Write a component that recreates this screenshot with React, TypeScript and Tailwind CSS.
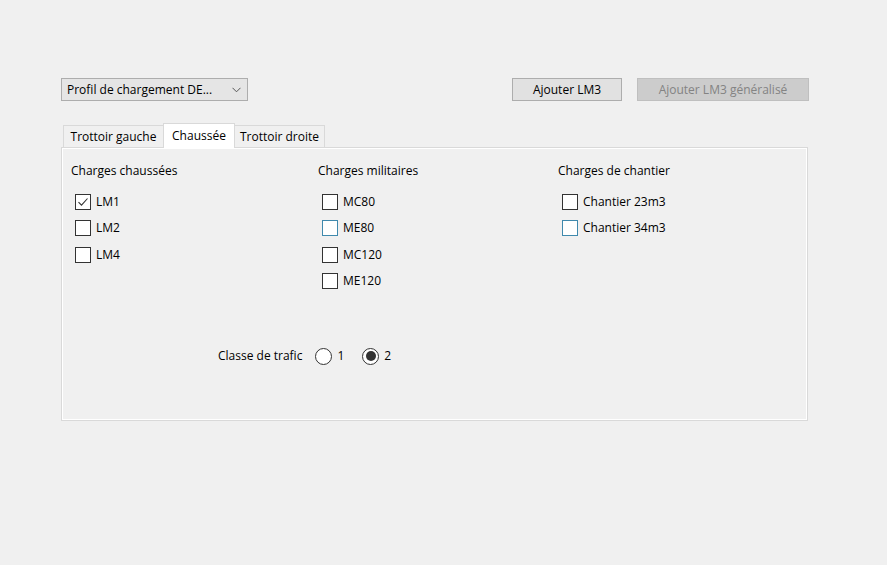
import { useState } from 'react'

const FONT = { fontFamily: '"Open Sans", "Noto Sans", "DejaVu Sans", sans-serif' }

const GROUPS = [
  {
    title: 'Charges chaussées',
    items: [
      { label: 'LM1', checked: true },
      { label: 'LM2' },
      { label: 'LM4' },
    ],
  },
  {
    title: 'Charges militaires',
    items: [
      { label: 'MC80' },
      { label: 'ME80', focus: true },
      { label: 'MC120' },
      { label: 'ME120' },
    ],
  },
  {
    title: 'Charges de chantier',
    items: [
      { label: 'Chantier 23m3' },
      { label: 'Chantier 34m3', focus: true },
    ],
  },
]

type Item = { label: string; checked?: boolean; focus?: boolean }

function CheckRow({ item }: { item: Item }) {
  const [on, setOn] = useState(!!item.checked)
  return (
    <label className="flex h-[26.3px] items-center gap-[5px] cursor-default" onClick={() => setOn(!on)}>
      <span
        className={
          'flex h-[16px] w-[16px] items-center justify-center border bg-white ' +
          (item.focus ? 'border-[#3f89ad]' : 'border-[#333333]')
        }
      >
        {on && (
          <svg width="12" height="12" viewBox="0 0 12 12">
            <path d="M1.5 6.2 L4.5 9.2 L10.5 2.5" fill="none" stroke="#333" strokeWidth="1.1" />
          </svg>
        )}
      </span>
      <span className="text-[12px] text-black">{item.label}</span>
    </label>
  )
}

function Radio({ label, checked }: { label: string; checked?: boolean }) {
  return (
    <span className="flex items-center gap-[5px]">
      <span className="flex h-[17px] w-[17px] items-center justify-center rounded-full border border-[#333333] bg-white">
        {checked && <span className="h-[10px] w-[10px] rounded-full bg-[#333333]" />}
      </span>
      <span>{label}</span>
    </span>
  )
}

const TAB_W = ['w-[100px]', 'w-[72px]', 'w-[90px]']

export default function App() {
  const tabs = ['Trottoir gauche', 'Chaussée', 'Trottoir droite']
  const active = 1

  return (
    <div className="min-h-[565px] w-[887px] bg-[#f0f0f0] pl-[61px] pt-[78px] text-[12px] text-black" style={FONT}>
      <div className="flex w-[748px] items-center justify-between">
        <div className="flex h-[23px] w-[187px] items-center justify-between border border-[#adadad] bg-[#e5e5e5] pl-[5px] pr-[6px]">
          <span>Profil de chargement DE...</span>
          <svg width="9" height="6" viewBox="0 0 9 6">
            <path d="M0.5 0.8 L4.5 4.8 L8.5 0.8" fill="none" stroke="#555" strokeWidth="1" />
          </svg>
        </div>
        <div className="flex gap-[15px]">
          <button className="h-[23px] w-[110px] border border-[#adadad] bg-[#e1e1e1]">Ajouter LM3</button>
          <button className="h-[23px] w-[172px] border border-[#bfbfbf] bg-[#cccccc] text-[#838383]">
            Ajouter LM3 généralisé
          </button>
        </div>
      </div>

      <div className="mt-[21px] w-[747px]">
        <div className="flex h-[25px] items-end pl-[2px]">
          {tabs.map((t, i) =>
            i === active ? (
              <div
                key={t}
                className={
                  'relative z-10 -mb-px flex h-[25px] items-center justify-center border border-b-0 border-[#d9d9d9] bg-white ' +
                  TAB_W[i]
                }
              >
                {t}
              </div>
            ) : (
              <div
                key={t}
                className={
                  'flex h-[22px] items-center justify-center border border-b-0 border-[#d9d9d9] bg-[#f0f0f0] first:border-r-0 last:border-l-0 ' +
                  TAB_W[i]
                }
              >
                {t}
              </div>
            ),
          )}
        </div>

        <div className="h-[274px] border border-[#d9d9d9]">
          <div className="flex h-full flex-col border border-white px-[8px] pt-[13px]">
            <div className="flex">
              {GROUPS.map((g, i) => (
                <div key={g.title} className={i === 0 ? 'w-[247px]' : 'w-[240px]'}>
                  <div className="h-[17px]">{g.title}</div>
                  <div className="mt-[10px] pl-[4px]">
                    {g.items.map((it) => (
                      <CheckRow key={it.label} item={it} />
                    ))}
                  </div>
                </div>
              ))}
            </div>
            <div className="mt-[53px] flex items-center pl-[147px]">
              <span className="mr-[13px]">Classe de trafic</span>
              <div className="flex gap-[18px]">
                <Radio label="1" />
                <Radio label="2" checked />
              </div>
            </div>
          </div>
        </div>
      </div>
    </div>
  )
}
